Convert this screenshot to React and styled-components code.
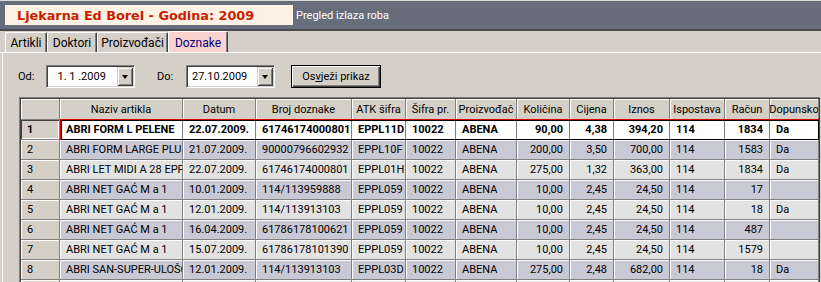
import styled, { createGlobalStyle } from "styled-components";

const GlobalStyle = createGlobalStyle`
  html, body {
    margin: 0;
    padding: 0;
    background: #d4d0c8;
    overflow: hidden;
  }
  body {
    font-family: Roboto, "Liberation Sans", Arial, sans-serif;
    font-size: 11px;
    color: #000;
  }
`;

const COLS = "39px 123px 73px 96px 54px 50px 61px 53px 44px 56px 55px 45px 49px";

const columns = [
  { title: "Naziv artikla", align: "left" },
  { title: "Datum", align: "left" },
  { title: "Broj doznake", align: "left" },
  { title: "ATK šifra", align: "left" },
  { title: "Šifra pr.", align: "left" },
  { title: "Proizvođač", align: "left" },
  { title: "Količina", align: "right" },
  { title: "Cijena", align: "right" },
  { title: "Iznos", align: "right" },
  { title: "Ispostava", align: "left" },
  { title: "Račun", align: "right" },
  { title: "Dopunsko", align: "left" },
];

const rows = [
  ["ABRI FORM L PELENE", "22.07.2009.", "61746174000801", "EPPL11D", "10022", "ABENA", "90,00", "4,38", "394,20", "114", "1834", "Da"],
  ["ABRI FORM LARGE PLUS", "21.07.2009.", "90000796602932", "EPPL10F", "10022", "ABENA", "200,00", "3,50", "700,00", "114", "1583", "Da"],
  ["ABRI LET MIDI A 28 EPPL01H", "22.07.2009.", "61746174000801", "EPPL01H", "10022", "ABENA", "275,00", "1,32", "363,00", "114", "1834", "Da"],
  ["ABRI NET GAĆ M a 1", "10.01.2009.", "114/113959888", "EPPL059", "10022", "ABENA", "10,00", "2,45", "24,50", "114", "17", ""],
  ["ABRI NET GAĆ M a 1", "12.01.2009.", "114/113913103", "EPPL059", "10022", "ABENA", "10,00", "2,45", "24,50", "114", "18", "Da"],
  ["ABRI NET GAĆ M a 1", "16.04.2009.", "61786178100621", "EPPL059", "10022", "ABENA", "10,00", "2,45", "24,50", "114", "487", ""],
  ["ABRI NET GAĆ M a 1", "15.07.2009.", "61786178101390", "EPPL059", "10022", "ABENA", "10,00", "2,45", "24,50", "114", "1579", ""],
  ["ABRI SAN-SUPER-ULOŠCI", "12.01.2009.", "114/113913103", "EPPL03D", "10022", "ABENA", "275,00", "2,48", "682,00", "114", "18", "Da"],
  ["", "", "", "", "", "", "", "", "", "", "", ""],
];

const Screen = styled.div`
  width: 821px;
  height: 282px;
  display: flex;
  flex-direction: column;
  overflow: hidden;

  & > * {
    flex-shrink: 0;
  }
`;

const TopBar = styled.div`
  display: flex;
  align-items: center;
  height: 28px;
  border-top: 1px solid #dcdcdc;
  border-bottom: 2px solid #4a4a4e;
  background: #676d7b;
`;

const TitleBox = styled.div`
  display: flex;
  align-items: center;
  width: 276px;
  height: 20px;
  margin-left: 5px;
  padding-left: 12px;
  background: #fdf2e3;
  color: #c81e00;
  font-family: "DejaVu Sans", Verdana, sans-serif;
  font-weight: bold;
  font-size: 12.8px;
  white-space: nowrap;
`;

const Subtitle = styled.div`
  margin-left: 3px;
  color: #ffffff;
  font-size: 11px;
`;

const TabStrip = styled.div`
  display: flex;
  align-items: flex-end;
  height: 21px;
  padding-left: 5px;
  border-bottom: 1px solid #ffffff;
`;

const Tab = styled.div`
  box-sizing: border-box;
  width: ${(p) => p.$w}px;
  height: ${(p) => (p.$active ? 21 : 20)}px;
  display: flex;
  align-items: center;
  justify-content: center;
  font-size: 12px;
  padding-top: 1px;
  background: ${(p) => (p.$active ? "#fad3ce" : "#d4d0c8")};
  color: ${(p) => (p.$active ? "#00007f" : "#000")};
  border-top: 1px solid #ffffff;
  border-left: 1px solid #ffffff;
  border-right: 1px solid #404040;
  border-radius: 2px 2px 0 0;
  box-shadow: inset -1px 0 0 #808080;
  white-space: nowrap;
`;

const Panel = styled.div`
  flex: 1 0 auto;
  margin-left: 2px;
  border-left: 1px solid #ffffff;
  padding: 12px 0 0 16px;
  display: flex;
  flex-direction: column;
`;

const FilterRow = styled.div`
  display: flex;
  align-items: center;
  height: 23px;
  margin-bottom: 9px;
`;

const Label = styled.span`
  margin-left: ${(p) => p.$ml || 0}px;
  width: ${(p) => p.$w}px;
  font-size: 11px;
`;

const DateBox = styled.div`
  box-sizing: border-box;
  width: 89px;
  height: 23px;
  display: flex;
  align-items: center;
  background: #ffffff;
  border: 1px solid;
  border-color: #808080 #ffffff #ffffff #808080;
  box-shadow: inset 1px 1px 0 #404040, inset -1px -1px 0 #d4d0c8;
  padding: 1px 1px 1px 5px;
`;

const DateText = styled.span`
  flex: 1;
  font-size: 11px;
  white-space: pre;
`;

const DropButton = styled.div`
  width: 16px;
  height: 19px;
  display: flex;
  align-items: center;
  justify-content: center;
  background: #d4d0c8;
  box-shadow: inset 1px 1px 0 #d4d0c8, inset -1px -1px 0 #404040,
    inset 2px 2px 0 #ffffff, inset -2px -2px 0 #808080;
`;

const Arrow = styled.span`
  width: 0;
  height: 0;
  border-left: 3.5px solid transparent;
  border-right: 3.5px solid transparent;
  border-top: 4px solid #000;
`;

const RefreshButton = styled.div`
  box-sizing: border-box;
  margin-left: 16px;
  width: 90px;
  height: 23px;
  display: flex;
  align-items: center;
  justify-content: center;
  border: 1px solid #000;
  background: #d4d0c8;
  box-shadow: inset 1px 1px 0 #ffffff, inset -1px -1px 0 #404040,
    inset -2px -2px 0 #808080;
  font-size: 11px;
`;

const GridOuter = styled.div`
  border-top: 1px solid #808080;
  border-left: 1px solid #808080;
  align-self: flex-start;
`;

const GridInner = styled.div`
  border-top: 1px solid #404040;
  border-left: 1px solid #404040;
  border-right: 1px solid #404040;
`;

const Row = styled.div`
  position: relative;
  display: grid;
  grid-template-columns: ${COLS};
  height: ${(p) => (p.$header ? 21 : 20)}px;
  background: ${(p) => p.$bg};
  font-weight: ${(p) => (p.$selected ? "bold" : "normal")};

  ${(p) =>
    p.$selected &&
    `
    &::after {
      content: "";
      position: absolute;
      left: 39px;
      right: -1px;
      top: -1px;
      bottom: -1px;
      border: 1px solid #e00000;
      box-shadow: inset 0 0 0 1px #000;
      pointer-events: none;
    }
  `}
`;

const Cell = styled.div`
  box-sizing: border-box;
  display: flex;
  align-items: center;
  justify-content: ${(p) =>
    p.$align === "right" ? "flex-end" : p.$align === "center" ? "center" : "flex-start"};
  padding-left: 6px;
  padding-right: ${(p) => (p.$align === "right" ? 6 : 0)}px;
  border-right: 1px solid #808080;
  border-bottom: 1px solid #808080;
  box-shadow: inset 1px 1px 0 #ffffff;
  white-space: nowrap;
  overflow: hidden;
  font-size: 11px;
`;

const HeadCell = styled(Cell)`
  background: #d4d0c8;
  padding: 0 2px;
`;

const IndicatorCell = styled(Cell)`
  background: #d4d0c8;
  padding-left: 6px;
  ${(p) =>
    p.$current &&
    `
    box-shadow: inset 1px 1px 0 #404040, inset -1px -1px 0 #ffffff;
    font-weight: bold;
  `}
`;

const tabs = [
  { name: "Artikli", w: 42 },
  { name: "Doktori", w: 50 },
  { name: "Proizvođači", w: 71 },
  { name: "Doznake", w: 60, active: true },
];

const rowBg = (i) => (i === 0 ? "#ffffff" : i % 2 === 1 ? "#c9c9d5" : "#e2e2e2");

export default function App() {
  return (
    <>
      <GlobalStyle />
      <Screen>
        <TopBar>
          <TitleBox>Ljekarna Ed Borel - Godina: 2009</TitleBox>
          <Subtitle>Pregled izlaza roba</Subtitle>
        </TopBar>

        <TabStrip>
          {tabs.map((t) => (
            <Tab key={t.name} $w={t.w} $active={t.active}>
              {t.name}
            </Tab>
          ))}
        </TabStrip>

        <Panel>
          <FilterRow>
            <Label $ml={-1} $w={28}>Od:</Label>
            <DateBox>
              <DateText>{"  1. 1 .2009"}</DateText>
              <DropButton>
                <Arrow />
              </DropButton>
            </DateBox>
            <Label $ml={22} $w={29}>Do:</Label>
            <DateBox>
              <DateText>27.10.2009</DateText>
              <DropButton>
                <Arrow />
              </DropButton>
            </DateBox>
            <RefreshButton>
              Os<u>v</u>ježi prikaz
            </RefreshButton>
          </FilterRow>

          <GridOuter>
            <GridInner>
              <Row $header>
                <HeadCell />
                {columns.map((c) => (
                  <HeadCell key={c.title} $align="center">
                    {c.title}
                  </HeadCell>
                ))}
              </Row>
              {rows.map((r, i) => (
                <Row key={i} $bg={rowBg(i)} $selected={i === 0}>
                  <IndicatorCell $current={i === 0}>{i + 1}</IndicatorCell>
                  {r.map((v, j) => (
                    <Cell key={j} $align={columns[j].align}>
                      {v}
                    </Cell>
                  ))}
                </Row>
              ))}
            </GridInner>
          </GridOuter>
        </Panel>
      </Screen>
    </>
  );
}
